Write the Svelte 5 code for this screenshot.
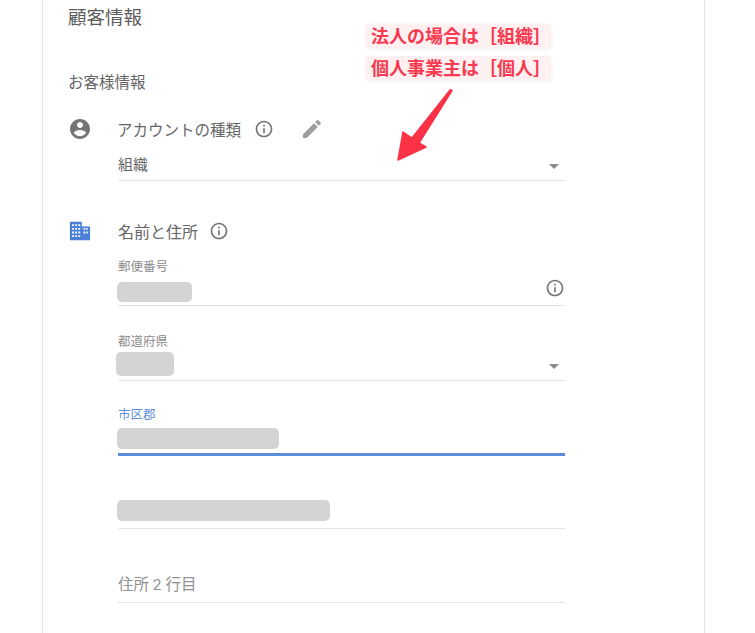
<script>
  const info = "M11 7h2v2h-2zm0 4h2v6h-2zm1-9C6.48 2 2 6.48 2 12s4.48 10 10 10 10-4.48 10-10S17.52 2 12 2zm0 18c-4.41 0-8-3.59-8-8s3.59-8 8-8 8 3.59 8 8-3.59 8-8 8z";
</script>

<div class="page">
  <main class="card">
    <h1>顧客情報</h1>
    <h2>お客様情報</h2>

    <section class="group account">
      <div class="head">
        <svg class="lead" viewBox="0 0 24 24"><path fill="#757575" d="M12 2C6.48 2 2 6.48 2 12s4.48 10 10 10 10-4.48 10-10S17.52 2 12 2zm0 3c1.66 0 3 1.34 3 3s-1.34 3-3 3-3-1.34-3-3 1.34-3 3-3zm0 14.2c-2.5 0-4.71-1.28-6-3.22.03-1.99 4-3.08 6-3.08s5.97 1.09 6 3.08c-1.29 1.94-3.5 3.22-6 3.22z"/></svg>
        <span class="label">アカウントの種類</span>
        <svg class="info" viewBox="0 0 24 24"><path fill="#757575" d={info}/></svg>
        <svg class="edit" viewBox="0 0 24 24"><path fill="#9e9e9e" d="M3 17.25V21h3.75L17.81 9.94l-3.75-3.75L3 17.25zM20.71 7.04a1 1 0 0 0 0-1.41l-2.34-2.34a1 1 0 0 0-1.41 0l-1.83 1.83 3.75 3.75 1.83-1.83z"/></svg>
      </div>
      <div class="field plain select first">
        <span class="value">組織</span>
        <i class="caret"></i>
      </div>
    </section>

    <section class="group address">
      <div class="head">
        <svg class="lead building" viewBox="0 0 24 24"><path fill="#4a80d6" d="M1 2h13v5h9v15H1V2zm2.4 2.6v2h2v-2zm3.4 0v2h2v-2zm3.4 0v2h2v-2zM3.4 8.6v2h2v-2zm3.4 0v2h2v-2zm3.4 0v2h2v-2zm5.6 0v2h2v-2zm3 0v2h1.6v-2zM3.4 12.6v2h2v-2zm3.4 0v2h2v-2zm3.4 0v2h2v-2zm5.6 0v2h2v-2zm3 0v2h1.6v-2zM3.4 16.6v2h2v-2zm3.4 0v2h2v-2zm3.4 0v2h2v-2z"/></svg>
        <span class="label">名前と住所</span>
        <svg class="info" viewBox="0 0 24 24"><path fill="#757575" d={info}/></svg>
      </div>

      <div class="field zip">
        <span class="small">郵便番号</span>
        <div class="mask" style="width:75px;height:20px"></div>
        <svg class="info end" viewBox="0 0 24 24"><path fill="#757575" d={info}/></svg>
      </div>

      <div class="field pref select">
        <span class="small">都道府県</span>
        <div class="mask nudge" style="width:58px;height:24px"></div>
        <i class="caret"></i>
      </div>

      <div class="field city">
        <span class="small blue">市区郡</span>
        <div class="mask" style="width:162px;height:21px"></div>
      </div>

      <div class="field line1">
        <div class="mask" style="width:213px;height:21px"></div>
      </div>

      <div class="field line2">
        <span class="hint">住所 2 行目</span>
      </div>
    </section>
  </main>

  <div class="note">
    <span>法人の場合は［組織］</span>
    <span>個人事業主は［個人］</span>
  </div>
  <svg class="arrow" viewBox="0 0 70 90" width="70" height="90">
    <path fill="#fb3246" stroke="#fb3246" stroke-width="1.5" stroke-linejoin="round" d="M59.5 9.5 L61 10.5 L28 63 L35 67 L7 80 L12 52 L21 58 Z"/>
  </svg>
</div>

<style>
  :global(body) {
    margin: 0;
    background: #fff;
  }

  .page {
    position: relative;
    width: 755px;
    height: 633px;
    overflow: hidden;
    font-family: Roboto, "Noto Sans CJK JP", sans-serif;
    color: #616161;
  }

  .card {
    box-sizing: border-box;
    width: 663px;
    height: 633px;
    margin-left: 42px;
    padding: 5px 0 0 25px;
    border-left: 1px solid #e2e2e2;
    border-right: 1px solid #e2e2e2;
  }

  h1 {
    margin: 0;
    font-size: 18.5px;
    font-weight: 400;
    line-height: 26px;
    color: #5c5c5c;
  }

  h2 {
    margin: 40px 0 0;
    font-size: 15.5px;
    font-weight: 400;
    line-height: 24px;
    color: #666;
  }

  .group.account {
    margin-top: 22px;
  }

  .group.address {
    margin-top: 38px;
  }

  .head {
    display: flex;
    align-items: center;
    height: 24px;
    margin-left: 1px;
  }

  .lead {
    width: 24px;
    height: 24px;
    margin-right: 25px;
    margin-left: -1px;
  }

  .building {
    width: 22px;
    height: 22px;
    margin-right: 27px;
    margin-left: 0;
  }

  .label {
    font-size: 16px;
    color: #666;
  }

  .account .label {
    font-size: 15.5px;
  }

  .info {
    width: 20px;
    height: 20px;
    margin-left: 11px;
  }

  .account .info {
    margin-left: 13px;
  }

  .edit {
    width: 24px;
    height: 24px;
    margin-left: 26px;
  }

  .field {
    position: relative;
    box-sizing: border-box;
    width: 447px;
    margin-left: 50px;
    border-bottom: 1px solid #e4e4e4;
  }

  .first {
    height: 32px;
    margin-top: 8px;
    padding-top: 5px;
  }

  .value {
    font-size: 15px;
    line-height: 22px;
    color: #666;
  }

  .small {
    display: block;
    font-size: 12.5px;
    line-height: 16px;
    color: #8c8c8c;
  }

  .blue {
    color: #5f8fdc;
  }

  .mask {
    border-radius: 5px;
    background: #d4d4d4;
  }

  .nudge {
    margin: 2px 0 0 -2px;
  }

  .zip {
    height: 52px;
    margin-top: 11px;
    padding-top: 5px;
  }

  .zip .mask {
    margin: 7px 0 0 -1px;
  }

  .end {
    position: absolute;
    right: 0;
    top: 24px;
    margin: 0;
  }

  .pref {
    height: 57px;
    margin-top: 18px;
    padding-top: 10px;
  }

  .city {
    height: 58px;
    margin-top: 17px;
    padding-top: 9px;
    border-bottom: 3px solid #5b8ddb;
  }

  .city .mask {
    margin-top: 5px;
  }

  .line1 {
    height: 48px;
    margin-top: 25px;
    padding-top: 19px;
  }

  .line1 .mask {
    margin-top: 0;
  }

  .line1 .mask,
  .city .mask {
    margin-left: -1px;
  }

  .line2 {
    height: 43px;
    margin-top: 31px;
    padding-top: 15px;
  }

  .hint {
    font-size: 15.5px;
    line-height: 20px;
    color: #929292;
  }

  .caret {
    position: absolute;
    right: 6px;
    bottom: 11px;
    width: 0;
    height: 0;
    border-left: 5px solid transparent;
    border-right: 5px solid transparent;
    border-top: 5px solid #8a8a8a;
  }

  /* annotation drawn on top of the screenshot */
  .note {
    position: absolute;
    left: 366px;
    top: 24px;
    display: flex;
    flex-direction: column;
    gap: 8px;
    font-size: 18px;
    font-weight: 700;
    color: #f8394f;
  }

  .note span {
    padding: 1px 0 0 5px;
    line-height: 23px;
    border-radius: 4px;
    background: #fff0f1;
    box-shadow: 0 1px 4px rgba(0, 0, 0, 0.07);
    white-space: nowrap;
  }

  .arrow {
    position: absolute;
    left: 391px;
    top: 80px;
  }
</style>
